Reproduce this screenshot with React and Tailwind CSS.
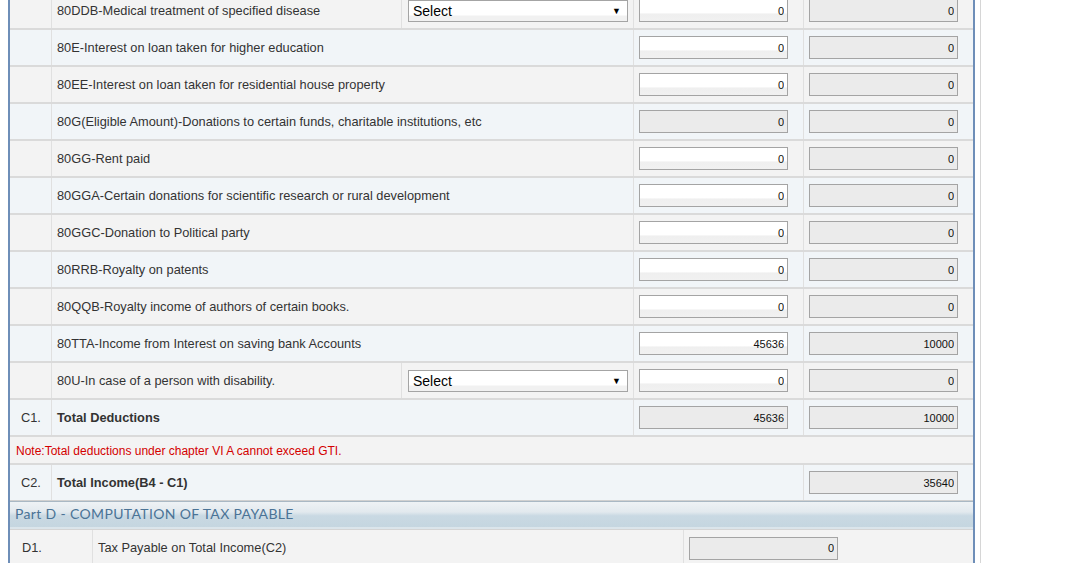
import React from "react";

const GRAY = "bg-[#f3f3f3]";
const BLUE = "bg-[#f1f5f8]";

function Box({ value, ro }) {
  return (
    <input
      readOnly
      value={value}
      className={
        "box-border h-[23px] w-[149px] border border-[#a4a4a4] pr-[3px] text-right text-[11px] text-[#111] outline-none " +
        (ro
          ? "bg-[#ebebeb]"
          : "bg-[linear-gradient(#ffffff_0%,#ffffff_62%,#efefef_66%,#f1f1f1_100%)]")
      }
      style={{ fontFamily: '"Liberation Sans", Arial, sans-serif' }}
    />
  );
}

function SelectBox() {
  return (
    <div className="box-border flex h-[22px] w-[220px] items-center justify-between border border-[#a4a4a4] bg-[linear-gradient(#ffffff_0%,#ffffff_70%,#f1f1f1_75%)] pl-[4px] pr-[6px] pt-[1px] text-[14px] text-black">
      <span>Select</span>
      <span className="text-[9px] leading-none">▼</span>
    </div>
  );
}

function Row({ bg, label, text, select, a, aro, b, bro, bold }) {
  return (
    <div className={"flex h-[37px] items-stretch border-b-2 border-[#dadada] " + bg}>
      <div className="box-border flex w-[42px] shrink-0 items-center border-r border-[#e0e0e0] pl-[11px] text-[12.8px] text-[#333]">
        {label}
      </div>
      {select ? (
        <>
          <div className="box-border flex w-[350px] shrink-0 items-center border-r border-[#e0e0e0] pl-[5px] text-[12.8px] text-[#333]">
            {text}
          </div>
          <div className="box-border flex w-[232px] shrink-0 items-center border-r border-[#e0e0e0] pl-[6px]">
            <SelectBox />
          </div>
        </>
      ) : (
        <div
          className={
            "box-border flex w-[582px] shrink-0 items-center border-r border-[#e0e0e0] pl-[5px] text-[12.8px] text-[#333] " +
            (bold ? "font-bold" : "")
          }
        >
          {text}
        </div>
      )}
      <div className="box-border flex w-[170px] shrink-0 items-center border-r border-[#e0e0e0] pl-[5px]">
        <Box value={a} ro={aro} />
      </div>
      <div className="flex flex-1 items-center pl-[5px]">
        <Box value={b} ro={bro} />
      </div>
    </div>
  );
}

export default function App() {
  const rows = [
    { text: "80DDB-Medical treatment of specified disease", select: true, a: "0", b: "0", bro: true },
    { text: "80E-Interest on loan taken for higher education", a: "0", b: "0", bro: true },
    { text: "80EE-Interest on loan taken for residential house property", a: "0", b: "0", bro: true },
    { text: "80G(Eligible Amount)-Donations to certain funds, charitable institutions, etc", a: "0", aro: true, b: "0", bro: true },
    { text: "80GG-Rent paid", a: "0", b: "0", bro: true },
    { text: "80GGA-Certain donations for scientific research or rural development", a: "0", b: "0", bro: true },
    { text: "80GGC-Donation to Political party", a: "0", b: "0", bro: true },
    { text: "80RRB-Royalty on patents", a: "0", b: "0", bro: true },
    { text: "80QQB-Royalty income of authors of certain books.", a: "0", b: "0", bro: true },
    { text: "80TTA-Income from Interest on saving bank Accounts", a: "45636", b: "10000", bro: true },
    { text: "80U-In case of a person with disability.", select: true, a: "0", b: "0", bro: true },
  ];

  return (
    <div
      className="flex h-[563px] w-full overflow-hidden bg-white"
      style={{ fontFamily: '"Liberation Sans", Arial, sans-serif' }}
    >
      <div className="w-[8px] shrink-0" />
      <div className="box-border w-[967px] shrink-0 border-x-2 border-[#6e8eb8]">
        <div className="-mt-[7px]">
          {rows.map((r, i) => (
            <Row key={i} bg={i % 2 === 0 ? GRAY : BLUE} {...r} />
          ))}
          <Row bg={BLUE} label="C1." text="Total Deductions" bold a="45636" aro b="10000" bro />
          <div className={"flex h-[28px] items-center border-b-2 border-[#dadada] pl-[6px] pt-[1px] text-[12px] text-[#d40000] " + GRAY}>
            Note:Total deductions under chapter VI A cannot exceed GTI.
          </div>
          <div className={"flex h-[36px] items-stretch border-b border-[#d0d0d0] " + BLUE}>
            <div className="box-border flex w-[42px] shrink-0 items-center border-r border-[#e0e0e0] pl-[11px] text-[12.8px] text-[#333]">
              C2.
            </div>
            <div className="box-border flex w-[752px] shrink-0 items-center border-r border-[#e0e0e0] pl-[5px] text-[12.8px] font-bold text-[#333]">
              Total Income(B4 - C1)
            </div>
            <div className="flex flex-1 items-center pl-[5px]">
              <Box value="35640" ro />
            </div>
          </div>
          <div
            className="box-border flex h-[28px] items-center border-t border-b-2 border-t-[#a9b8c4] border-b-[#dbe5eb] bg-[linear-gradient(#eef2f5_0%,#e2e9ee_40%,#c9d9e3_55%,#c5d6e0_100%)] pb-[3px] pl-[5px] text-[14px] tracking-[0.35px] text-[#4a7396]"
            style={{ fontFamily: 'Lato, "DejaVu Sans", sans-serif' }}
          >
            Part D - COMPUTATION OF TAX PAYABLE
          </div>
          <div className={"flex h-[37px] items-stretch border-t border-[#d4d4d4] " + GRAY}>
            <div className="box-border flex w-[83px] shrink-0 items-center border-r border-[#e0e0e0] pl-[12px] text-[12.8px] text-[#333]">
              D1.
            </div>
            <div className="box-border flex w-[591px] shrink-0 items-center border-r border-[#e0e0e0] pl-[5px] text-[12.8px] text-[#333]">
              Tax Payable on Total Income(C2)
            </div>
            <div className="flex flex-1 items-center pl-[5px]">
              <Box value="0" ro />
            </div>
          </div>
        </div>
      </div>
      <div className="w-[5px] shrink-0" />
      <div className="w-px shrink-0 bg-[#d6d6d6]" />
    </div>
  );
}
